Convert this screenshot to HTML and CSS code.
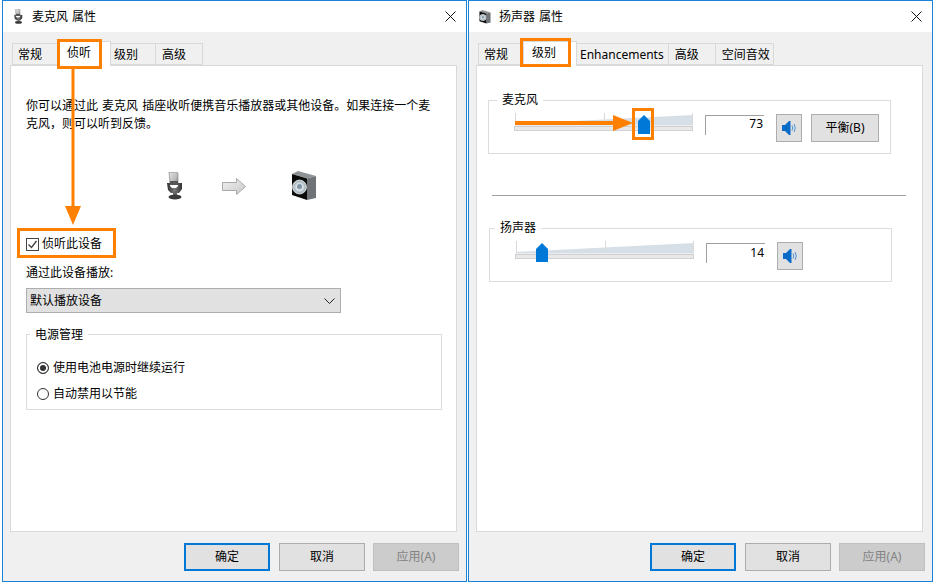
FILE: index.html
```html
<!DOCTYPE html>
<html lang="zh-CN">
<head>
<meta charset="utf-8">
<title>属性</title>
<link rel="stylesheet" href="styles.css">
</head>
<body>
<svg class="defs" width="0" height="0" aria-hidden="true">
  <defs>
    <linearGradient id="micHead" x1="0" x2="1" y1="0" y2="1"><stop offset="0" stop-color="#e6e6e6"/><stop offset=".6" stop-color="#bdbdbd"/><stop offset="1" stop-color="#8a8a8a"/></linearGradient>
    <linearGradient id="micBody" x1="0" x2="1" y1="0" y2="0"><stop offset="0" stop-color="#2e2e2e"/><stop offset=".5" stop-color="#777"/><stop offset="1" stop-color="#333"/></linearGradient>
    <linearGradient id="arrowFill" x1="0" x2="1" y1="0" y2="1"><stop offset="0" stop-color="#f2f2f2"/><stop offset="1" stop-color="#c8c8c8"/></linearGradient>
    <radialGradient id="cone"><stop offset="0" stop-color="#8fa0ad"/><stop offset=".45" stop-color="#dfe7ec"/><stop offset=".8" stop-color="#a9b6bf"/><stop offset="1" stop-color="#e6e6e6"/></radialGradient>
    <symbol id="mic" viewBox="0 0 16 28">
      <path d="M2 .5 9 0l2 1v11H3z" fill="url(#micHead)" stroke="#777" stroke-width=".6"/>
      <path d="M3 9h8v4H3z" fill="#555"/>
      <path d="M0 11h3v3l2 2h4l2-2v-3h4v6l-3 4H4l-3-3z" fill="url(#micBody)"/>
      <rect x="6" y="20" width="4" height="3" fill="#666"/>
      <ellipse cx="8" cy="25" rx="6.500" ry="2.500" fill="#3a3a3a"/>
    </symbol>
    <symbol id="speaker" viewBox="0 0 26 30">
      <path d="M1 3 7 0l18 5-9 2.500z" fill="#8f9296"/>
      <path d="M16 7.500 25 5v22l-9 2z" fill="#707478"/>
      <path d="M1 3l15 4.500V29L1 24z" fill="#0a0a0a"/>
      <circle cx="8.500" cy="16" r="7" fill="url(#cone)" stroke="#cfd5d9" stroke-width=".8"/>
      <circle cx="8.500" cy="15.500" r="2.500" fill="#8395a2"/>
    </symbol>
    <symbol id="mute" viewBox="0 0 16 16">
      <path d="M1 5h3l4-4h1.500v14H8l-4-4H1z" fill="#0a6cc9"/>
      <path d="M11 5.500q1.500 2.500 0 5M13 4q2.500 4 0 8" fill="none" stroke="#4a94d8" stroke-width="1"/>
    </symbol>
    <symbol id="level" viewBox="0 0 180 18">
      <path d="M1 11 179 2v10.500H1z" fill="#d6dee6"/>
      <path d="M1.500 0v11M90.500 0v9M178.500 0v10" stroke="#d9d9d9" fill="none"/>
      <rect x=".5" y="13.500" width="178" height="4" fill="#e8e9e8" stroke="#cfd0cf"/>
    </symbol>
    <symbol id="thumb" viewBox="0 0 12 19">
      <path d="M0 19V6l6-6 6 6v13z" fill="#0078d7"/>
    </symbol>
  </defs>
</svg>

<main class="screen">
  <section class="window">
    <header class="titlebar">
      <svg class="title-icon title-icon-mic"><use href="#mic"/></svg>
      <span class="title-text">麦克风 属性</span>
      <svg class="close" viewBox="0 0 11 11"><path d="M.5.5l10 10M10.500.5l-10 10"/></svg>
    </header>
    <div class="dialog">
      <nav class="tabs">
        <span class="tab">常规</span>
        <span class="tab tab-active">侦听</span>
        <span class="tab tab-after">级别</span>
        <span class="tab tab-wide">高级</span>
      </nav>
      <div class="pane pane-listen">
        <p class="intro">你可以通过此 麦克风 插座收听便携音乐播放器或其他设备。如果连接一个麦<br>克风，则可以听到反馈。</p>
        <div class="flow">
          <svg class="flow-mic"><use href="#mic"/></svg>
          <svg class="flow-arrow" viewBox="0 0 24 17"><path d="M.5 4.500h14V.5l9 8-9 8v-4H.5z" fill="url(#arrowFill)" stroke="#a9a9a9"/></svg>
          <svg class="flow-speaker"><use href="#speaker"/></svg>
        </div>
        <label class="check-row">
          <span class="checkbox"><svg viewBox="0 0 11 11"><path d="M1.500 5.500l3 3 5-6.500"/></svg></span>
          <span>侦听此设备</span>
        </label>
        <div class="play-label">通过此设备播放:</div>
        <div class="select">
          <span>默认播放设备</span>
          <svg viewBox="0 0 11 6"><path d="M.5.5l5 5 5-5"/></svg>
        </div>
        <fieldset class="group group-power">
          <legend>电源管理</legend>
          <div class="radio-row"><span class="radio radio-on"></span><span>使用电池电源时继续运行</span></div>
          <div class="radio-row"><span class="radio"></span><span>自动禁用以节能</span></div>
        </fieldset>
      </div>
      <footer class="buttons">
        <button class="btn btn-default">确定</button>
        <button class="btn btn-cancel">取消</button>
        <button class="btn btn-disabled">应用(A)</button>
      </footer>
    </div>
    <div class="mark mark-tab1"></div>
    <div class="mark mark-check"></div>
    <svg class="arrow arrow-down" viewBox="0 0 18 157"><path d="M7.500 0h3v137H17L9 156 1 137h6.500z"/></svg>
  </section>

  <section class="window">
    <header class="titlebar">
      <svg class="title-icon title-icon-speaker"><use href="#speaker"/></svg>
      <span class="title-text">扬声器 属性</span>
      <svg class="close" viewBox="0 0 11 11"><path d="M.5.5l10 10M10.500.5l-10 10"/></svg>
    </header>
    <div class="dialog">
      <nav class="tabs">
        <span class="tab tab-tight">常规</span>
        <span class="tab tab-active">级别</span>
        <span class="tab tab-latin">Enhancements</span>
        <span class="tab tab-wide">高级</span>
        <span class="tab tab-last">空间音效</span>
      </nav>
      <div class="pane pane-levels">
        <fieldset class="group group-level">
          <legend>麦克风</legend>
          <div class="level-row">
            <div class="slider">
              <svg class="slider-track"><use href="#level"/></svg>
              <svg class="slider-thumb" style="left:124px"><use href="#thumb"/></svg>
            </div>
            <div class="value value-raised">73</div>
            <button class="icon-btn"><svg viewBox="0 0 16 16"><use href="#mute"/></svg></button>
            <button class="btn btn-balance">平衡(B)</button>
          </div>
        </fieldset>
        <hr class="divider">
        <fieldset class="group group-level group-speaker">
          <legend>扬声器</legend>
          <div class="level-row">
            <div class="slider">
              <svg class="slider-track"><use href="#level"/></svg>
              <svg class="slider-thumb" style="left:21px"><use href="#thumb"/></svg>
            </div>
            <div class="value">14</div>
            <button class="icon-btn"><svg viewBox="0 0 16 16"><use href="#mute"/></svg></button>
          </div>
        </fieldset>
      </div>
      <footer class="buttons">
        <button class="btn btn-default">确定</button>
        <button class="btn btn-cancel">取消</button>
        <button class="btn btn-disabled">应用(A)</button>
      </footer>
    </div>
    <div class="mark mark-tab2"></div>
    <div class="mark mark-thumb"></div>
    <svg class="arrow arrow-right" viewBox="0 0 118 16"><path d="M0 6h98V0l20 8-20 8v-6H0z"/></svg>
  </section>
</main>
</body>
</html>
```

FILE: styles.css
```css
* { box-sizing: border-box; }
html, body { margin: 0; padding: 0; background: #fff; }
body {
  width: 935px;
  height: 583px;
  overflow: hidden;
  font: 12px/18px "Noto Sans", "Noto Sans CJK SC", sans-serif;
  word-spacing: 1px;
  color: #000;
}
.defs { position: absolute; }
.screen { display: flex; gap: 1px; padding-left: 2px; height: 582px; }

.window {
  position: relative;
  display: flex;
  flex-direction: column;
  width: 465px;
  height: 582px;
  border: 1px solid #1a83d8;
  background: #f0f0f0;
}
.titlebar {
  display: flex;
  align-items: center;
  height: 31px;
  flex: none;
  padding-right: 10px;
  background: #fff;
}
.title-icon { flex: none; }
.title-icon-mic { width: 9px; height: 15px; margin-left: 11px; margin-right: 9px; }
.title-icon-speaker { width: 12px; height: 14px; margin-left: 10px; margin-right: 8px; }
.title-text { flex: 1; }
.close { width: 11px; height: 11px; }
.close path { stroke: #111; stroke-width: 1; fill: none; }

.dialog {
  flex: 1;
  display: flex;
  flex-direction: column;
  padding: 11px 9px 10px 7px;
}
.tabs { display: flex; align-items: flex-end; height: 22px; margin-left: 2px; flex: none; }
.tab {
  position: relative;
  height: 22px;
  padding: 0 16px 0 5px;
  line-height: 21px;
  background: #f0f0f0;
  border: 1px solid #d9d9d9;
  border-left-width: 0;
}
.tab:first-child { border-left-width: 1px; }
.tab-tight { padding-right: 15px; }
.tab-active {
  height: 25px;
  margin-bottom: -1px;
  margin-left: -1px;
  padding: 0 19px 0 8px;
  line-height: 22px;
  background: #fff;
  border-bottom: 0;
  border-left-width: 1px;
  z-index: 1;
}
.tab-tight + .tab-active { padding-right: 20px; }
.tab-after { padding: 0 17px 0 3px; }
.tab-wide { padding: 0 16px 0 6px; }
.tab-last { padding: 0 3px 0 6px; }
.tab-latin { padding: 0 4px 0 3px; }

.pane {
  flex: 1;
  background: #fff;
  border: 1px solid #d9d9d9;
  min-height: 0;
}
.pane-listen { padding: 31px 14px 0 15px; }
.pane-levels { padding: 27px 0 0 11px; }
.intro { margin: 0; width: 420px; }
.flow { display: flex; align-items: center; height: 30px; margin-top: 38px; padding-left: 141px; }
.flow-mic { width: 16px; height: 28px; }
.flow-arrow { width: 24px; height: 17px; margin-left: 39px; }
.flow-speaker { width: 26px; height: 30px; margin-left: 45px; }

.check-row { display: flex; align-items: center; gap: 3px; height: 18px; margin-top: 34px; }
.checkbox { display: block; width: 13px; height: 13px; border: 1px solid #444; background: #fff; }
.checkbox svg { display: block; width: 11px; height: 11px; }
.checkbox path { fill: none; stroke: #444; stroke-width: 1.400; }
.play-label { margin-top: 11px; }
.select {
  display: flex;
  align-items: center;
  justify-content: space-between;
  width: 315px;
  height: 25px;
  margin-top: 6px;
  padding: 0 3px;
  background: #e1e1e1;
  border: 1px solid #adadad;
}
.select svg { width: 11px; height: 6px; margin-right: 2px; }
.select path { fill: none; stroke: #222; stroke-width: 1; }

.group { margin: 0; padding: 0; border: 1px solid #dcdcdc; min-width: 0; }
.group legend { height: 14px; padding: 0 5px; line-height: 14px; }
.group-power { width: 416px; height: 83px; margin-top: 14px; padding-top: 14px; }
.group-power legend { margin-left: 3px; line-height: 16px; }
.radio-row { display: flex; align-items: center; gap: 4px; height: 26px; padding-left: 10px; }
.radio { width: 12px; height: 12px; border: 1px solid #333; border-radius: 50%; background: #fff; }
.radio-on { background: #333; box-shadow: inset 0 0 0 2px #fff; }

.group-level { width: 403px; height: 61px; }
.group-level legend { margin-left: 8px; }
.group-speaker { margin-left: 1px; }
.group-speaker legend { margin-left: 5px; }
.level-row { display: flex; align-items: flex-start; height: 28px; margin-top: 7px; padding-left: 25px; }
.slider { position: relative; width: 180px; height: 28px; margin-top: -1px; }
.slider-track { display: block; width: 180px; height: 18px; }
.slider-thumb { position: absolute; top: 2px; width: 12px; height: 19px; }
.value {
  width: 59px;
  height: 20px;
  margin: 1px 0 0 11px;
  padding-right: 1px;
  border-top: 1px solid #a0a0a0;
  border-left: 1px solid #a0a0a0;
  text-align: right;
  line-height: 18px;
}
.value-raised { line-height: 16px; }
.icon-btn {
  display: flex;
  align-items: center;
  justify-content: center;
  width: 26px;
  height: 28px;
  margin-left: 12px;
  padding: 0;
  background: #e1e1e1;
  border: 1px solid #adadad;
}
.icon-btn svg { width: 16px; height: 16px; }
.divider { width: 414px; height: 1px; margin: 41px 0 25px 4px; border: 0; background: #a0a0a0; }

.buttons { display: flex; justify-content: flex-end; height: 28px; margin: 11px -2px 0 0; flex: none; }
.btn {
  width: 86px;
  height: 28px;
  padding: 0;
  font: inherit;
  word-spacing: inherit;
  color: #000;
  background: #e1e1e1;
  border: 1px solid #adadad;
}
.btn-default { border: 2px solid #0078d7; margin-right: 9px; }
.btn-cancel { margin-right: 8px; }
.btn-disabled { color: #838383; background: #ccc; border-color: #bfbfbf; }
.btn-balance { width: 68px; margin-left: 9px; }

.mark { position: absolute; z-index: 2; border: 3px solid #ff8000; }
.mark-tab1 { left: 54px; top: 38px; width: 45px; height: 30px; }
.mark-check { left: 14px; top: 227px; width: 99px; height: 30px; }
.mark-tab2 { left: 51px; top: 37px; width: 51px; height: 29px; }
.mark-thumb { left: 163px; top: 107px; width: 22px; height: 32px; }
.arrow { position: absolute; z-index: 2; }
.arrow path { fill: #ff8000; }
.arrow-down { left: 61px; top: 68px; width: 18px; height: 157px; }
.arrow-right { left: 46px; top: 114px; width: 118px; height: 16px; }
```
